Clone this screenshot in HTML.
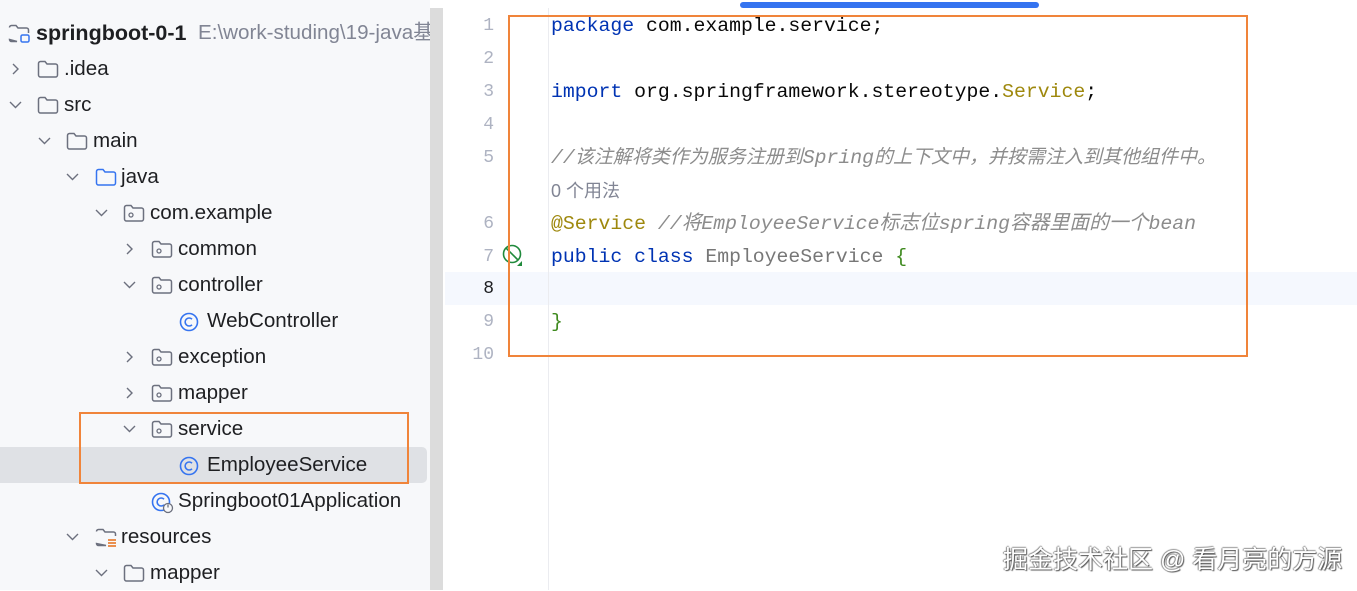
<!DOCTYPE html>
<html><head><meta charset="utf-8"><style>
body{margin:0;width:1357px;height:590px;overflow:hidden;background:#fff;position:relative;font-family:"Liberation Sans","Noto Sans CJK SC",sans-serif}
#side{position:absolute;left:0;top:0;width:430px;height:590px;background:#f7f8fa}
#sb{position:absolute;left:430px;top:8px;width:13px;height:582px;background:#dcdcdc}
.r{position:absolute;height:36px;line-height:36px;font-size:20.6px;color:#1e1f22;white-space:nowrap}
.r svg{position:absolute;top:9px}
.r svg.ch{top:11px}
.code{position:absolute;left:551px;font-family:"Liberation Mono","Noto Sans CJK SC",monospace;font-size:19.8px;line-height:33px;white-space:pre;color:#080808}
.ln{position:absolute;width:48px;text-align:right;left:446px;font-family:"Liberation Mono",monospace;font-size:18px;line-height:33px;color:#aeb3c2}
.kw{color:#0033b3}.an{color:#9e880d}.cm{color:#8c8c8c;font-style:italic}.cls{color:#777}
</style></head><body>
<div id="side"></div>
<div style="position:absolute;left:0;top:447px;width:427px;height:36px;background:#dfe1e5;border-radius:0 5px 5px 0"></div>
<div style="position:absolute;left:445px;top:272px;width:912px;height:33px;background:#f5f8fe"></div>
<div style="position:absolute;left:548px;top:8px;width:1px;height:582px;background:#ebecf0"></div>

<svg width="0" height="0" style="position:absolute"><defs>
<g id="fd"><path d="M1.5 3.5a2 2 0 0 1 2-2h4.5l2 2.5h8.5a2 2 0 0 1 2 2v9a2 2 0 0 1-2 2h-15a2 2 0 0 1-2-2z" fill="none" stroke="#6c707e" stroke-width="1.5"/></g>
<g id="pk"><path d="M1.5 3.5a2 2 0 0 1 2-2h4.5l2 2.5h8.5a2 2 0 0 1 2 2v9a2 2 0 0 1-2 2h-15a2 2 0 0 1-2-2z" fill="none" stroke="#6c707e" stroke-width="1.5"/><circle cx="8" cy="11" r="2" fill="none" stroke="#6c707e" stroke-width="1.3"/></g>
<g id="cl"><circle cx="10" cy="10" r="8.5" fill="none" stroke="#3574f0" stroke-width="1.6"/><path d="M13 7.2a4 4 0 1 0 0 5.6" fill="none" stroke="#3574f0" stroke-width="1.6"/></g>
<g id="cr"><path d="M4 2l5 5-5 5" fill="none" stroke="#6c707e" stroke-width="1.4"/></g>
<g id="cd"><path d="M1 4l5.5 5.5L12 4" fill="none" stroke="#6c707e" stroke-width="1.4"/></g>
</defs></svg>

<div class="r" style="left:8px;top:15px"><svg width="22" height="20" style="left:0"><path d="M1.5 3.5a2 2 0 0 1 2-2h4.5l2 2.5h8.5a2 2 0 0 1 2 2v3M9 17.5h-5.5a2 2 0 0 1-2-2z" fill="none" stroke="#6c707e" stroke-width="1.5"/><rect x="13" y="11" width="8" height="7" rx="1.5" fill="none" stroke="#3574f0" stroke-width="1.5"/></svg><span style="position:absolute;left:28px;font-weight:bold;font-size:21.5px">springboot-0-1</span><span style="position:absolute;left:190px;width:245px;overflow:hidden;color:#818594">E:\work-studing\19-java基础</span></div>
<div id="sb"></div>
<div style="position:absolute;left:430px;top:0;width:927px;height:8px;background:#fff"></div>
<div style="position:absolute;left:740px;top:2px;width:299px;height:6px;background:#3574f0;border-radius:3px"></div>

<div class="r" style="left:0;top:51px"><svg class="ch" width="14" height="14" style="left:9px"><use href="#cr"/></svg><svg width="22" height="20" style="left:37px"><use href="#fd"/></svg><span style="position:absolute;left:64px">.idea</span></div>
<div class="r" style="left:0;top:87px"><svg class="ch" width="14" height="14" style="left:9px"><use href="#cd"/></svg><svg width="22" height="20" style="left:37px"><use href="#fd"/></svg><span style="position:absolute;left:64px">src</span></div>
<div class="r" style="left:0;top:123px"><svg class="ch" width="14" height="14" style="left:38px"><use href="#cd"/></svg><svg width="22" height="20" style="left:66px"><use href="#fd"/></svg><span style="position:absolute;left:93px">main</span></div>
<div class="r" style="left:0;top:159px"><svg class="ch" width="14" height="14" style="left:66px"><use href="#cd"/></svg><svg width="22" height="20" style="left:95px"><path d="M1.5 3.5a2 2 0 0 1 2-2h4.5l2 2.5h8.5a2 2 0 0 1 2 2v9a2 2 0 0 1-2 2h-15a2 2 0 0 1-2-2z" fill="none" stroke="#3574f0" stroke-width="1.5"/></svg><span style="position:absolute;left:121px">java</span></div>
<div class="r" style="left:0;top:195px"><svg class="ch" width="14" height="14" style="left:95px"><use href="#cd"/></svg><svg width="22" height="20" style="left:123px"><use href="#pk"/></svg><span style="position:absolute;left:150px">com.example</span></div>
<div class="r" style="left:0;top:231px"><svg class="ch" width="14" height="14" style="left:123px"><use href="#cr"/></svg><svg width="22" height="20" style="left:151px"><use href="#pk"/></svg><span style="position:absolute;left:178px">common</span></div>
<div class="r" style="left:0;top:267px"><svg class="ch" width="14" height="14" style="left:123px"><use href="#cd"/></svg><svg width="22" height="20" style="left:151px"><use href="#pk"/></svg><span style="position:absolute;left:178px">controller</span></div>
<div class="r" style="left:0;top:303px"><svg width="22" height="20" style="left:179px"><use href="#cl"/></svg><span style="position:absolute;left:207px">WebController</span></div>
<div class="r" style="left:0;top:339px"><svg class="ch" width="14" height="14" style="left:123px"><use href="#cr"/></svg><svg width="22" height="20" style="left:151px"><use href="#pk"/></svg><span style="position:absolute;left:178px">exception</span></div>
<div class="r" style="left:0;top:375px"><svg class="ch" width="14" height="14" style="left:123px"><use href="#cr"/></svg><svg width="22" height="20" style="left:151px"><use href="#pk"/></svg><span style="position:absolute;left:178px">mapper</span></div>
<div class="r" style="left:0;top:411px"><svg class="ch" width="14" height="14" style="left:123px"><use href="#cd"/></svg><svg width="22" height="20" style="left:151px"><use href="#pk"/></svg><span style="position:absolute;left:178px">service</span></div>
<div class="r" style="left:0;top:447px"><svg width="22" height="20" style="left:179px"><use href="#cl"/></svg><span style="position:absolute;left:207px">EmployeeService</span></div>
<div class="r" style="left:0;top:483px"><svg width="24" height="22" style="left:151px"><use href="#cl"/><circle cx="17" cy="16" r="4.5" fill="#f7f8fa" stroke="#6c707e" stroke-width="1.3"/><path d="M17 12.5v3" stroke="#6c707e" stroke-width="1.3"/></svg><span style="position:absolute;left:178px">Springboot01Application</span></div>
<div class="r" style="left:0;top:519px"><svg class="ch" width="14" height="14" style="left:66px"><use href="#cd"/></svg><svg width="24" height="22" style="left:95px"><path d="M1.5 3.5a2 2 0 0 1 2-2h4.5l2 2.5h8.5a2 2 0 0 1 2 2v2M11 17.5h-7.5a2 2 0 0 1-2-2z" fill="none" stroke="#6c707e" stroke-width="1.5"/><path d="M13 12h8M13 15h8M13 18h8" stroke="#e66d17" stroke-width="1.5"/></svg><span style="position:absolute;left:121px">resources</span></div>
<div class="r" style="left:0;top:555px"><svg class="ch" width="14" height="14" style="left:95px"><use href="#cd"/></svg><svg width="22" height="20" style="left:123px"><use href="#fd"/></svg><span style="position:absolute;left:150px">mapper</span></div>

<div class="ln" style="top:10px">1</div>
<div class="ln" style="top:43px">2</div>
<div class="ln" style="top:76px">3</div>
<div class="ln" style="top:109px">4</div>
<div class="ln" style="top:142px">5</div>
<div class="ln" style="top:208px">6</div>
<div class="ln" style="top:241px">7</div>
<div class="ln" style="top:273px;color:#1e1f22">8</div>
<div class="ln" style="top:306px">9</div>
<div class="ln" style="top:339px">10</div>
<svg width="26" height="26" style="position:absolute;left:501px;top:243px"><circle cx="11" cy="11" r="8.5" fill="none" stroke="#208a3c" stroke-width="1.6"/><path d="M5 5l12 12" stroke="#208a3c" stroke-width="1.6"/><path d="M21 18v5h-5z" fill="#208a3c"/></svg>

<div class="code" style="top:10px"><span class="kw">package</span> com.example.service;</div>
<div class="code" style="top:76px"><span class="kw">import</span> org.springframework.stereotype.<span class="an">Service</span>;</div>
<div class="code cm" style="top:142px">//<span style="font-size:19px">该注解将类作为服务注册到</span>Spring<span style="font-size:19px">的上下文中，并按需注入到其他组件中。</span></div>
<div class="code" style="top:175px;font-family:'Liberation Sans','Noto Sans CJK SC',sans-serif;font-size:18px;color:#818594">0 个用法</div>
<div class="code" style="top:208px"><span class="an">@Service</span> <span class="cm">//将EmployeeService标志位spring容器里面的一个bean</span></div>
<div class="code" style="top:241px"><span class="kw">public class</span> <span class="cls">EmployeeService</span> <span style="color:#3f8a1f">{</span></div>
<div class="code" style="top:306px;color:#3f8a1f">}</div>

<div style="position:absolute;left:79px;top:412px;width:326px;height:68px;border:2.5px solid #f0843a"></div>
<div style="position:absolute;left:508px;top:15px;width:736px;height:338px;border:2.5px solid #f0843a"></div>

<div style="position:absolute;left:1003px;top:540px;font-size:25px;color:#fff;text-shadow:1px 1px 1px #555,-1px 0 1px #888,0 -1px 1px #999;white-space:nowrap;font-family:'Liberation Sans','Noto Sans CJK SC',sans-serif">掘金技术社区 @ 看月亮的方源</div>
</body></html>
